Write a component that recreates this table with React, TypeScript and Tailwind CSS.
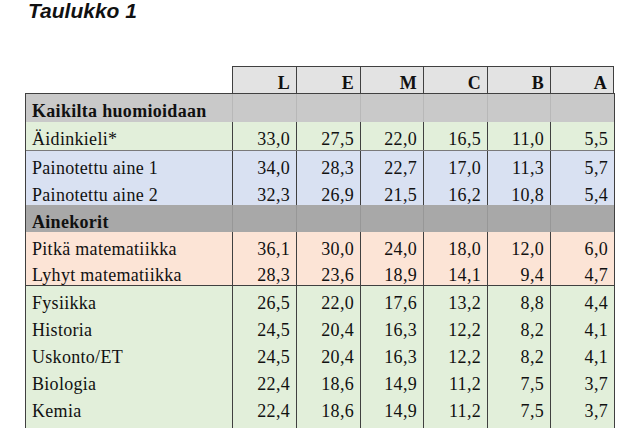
import React from 'react';

const widths = ['w-[64px]', 'w-[64px]', 'w-[63px]', 'w-[64px]', 'w-[63px]', 'w-[64px]'];
const headers = ['L', 'E', 'M', 'C', 'B', 'A'];

type Row = { label: string; values: string[]; h: string };

const groups: { bg: string; topLine: string; rows: Row[] }[] = [
  {
    bg: 'bg-[#e2efda]',
    topLine: '',
    rows: [{ label: 'Äidinkieli*', values: ['33,0', '27,5', '22,0', '16,5', '11,0', '5,5'], h: 'h-[28px]' }],
  },
  {
    bg: 'bg-[#d9e1f2]',
    topLine: 'border-t border-[#7a7a7a]',
    rows: [
      { label: 'Painotettu aine 1', values: ['34,0', '28,3', '22,7', '17,0', '11,3', '5,7'], h: 'h-[27px]' },
      { label: 'Painotettu aine 2', values: ['32,3', '26,9', '21,5', '16,2', '10,8', '5,4'], h: 'h-[27px]' },
    ],
  },
];

const groups2: { bg: string; topLine: string; rows: Row[] }[] = [
  {
    bg: 'bg-[#fce4d6]',
    topLine: '',
    rows: [
      { label: 'Pitkä matematiikka', values: ['36,1', '30,0', '24,0', '18,0', '12,0', '6,0'], h: 'h-[27px]' },
      { label: 'Lyhyt matematiikka', values: ['28,3', '23,6', '18,9', '14,1', '9,4', '4,7'], h: 'h-[26px]' },
    ],
  },
  {
    bg: 'bg-[#e2efda]',
    topLine: 'border-t border-[#404040]',
    rows: [
      { label: 'Fysiikka', values: ['26,5', '22,0', '17,6', '13,2', '8,8', '4,4'], h: 'h-[27px]' },
      { label: 'Historia', values: ['24,5', '20,4', '16,3', '12,2', '8,2', '4,1'], h: 'h-[27px]' },
      { label: 'Uskonto/ET', values: ['24,5', '20,4', '16,3', '12,2', '8,2', '4,1'], h: 'h-[27px]' },
      { label: 'Biologia', values: ['22,4', '18,6', '14,9', '11,2', '7,5', '3,7'], h: 'h-[27px]' },
      { label: 'Kemia', values: ['22,4', '18,6', '14,9', '11,2', '7,5', '3,7'], h: 'h-[27px]' },
      { label: '', values: ['', '', '', '', '', ''], h: 'h-[27px]' },
    ],
  },
];

const DataRow = ({ row }: { row: Row }) => (
  <div className={`flex ${row.h}`}>
    <div className="w-[206px] flex items-center pl-[6px] pt-[6px] leading-none">{row.label}</div>
    {row.values.map((v, i) => (
      <div
        key={i}
        className={`${widths[i]} border-l border-[#404040] flex items-center justify-end pr-[6px] pt-[6px] leading-none`}
      >
        {v}
      </div>
    ))}
  </div>
);

const SectionRow = ({ label, bg, line, h }: { label: string; bg: string; line: string; h: string }) => (
  <div className={`flex ${h} ${bg}`}>
    <div className="w-[206px] flex items-center pl-[6px] pt-[6px] leading-none font-bold whitespace-nowrap">
      {label}
    </div>
    {widths.map((w, i) => (
      <div key={i} className={`${w} border-l ${line}`} />
    ))}
  </div>
);

const Group = ({ g }: { g: { bg: string; topLine: string; rows: Row[] } }) => (
  <div className={`${g.bg} ${g.topLine}`}>
    {g.rows.map((r, i) => (
      <DataRow key={i} row={r} />
    ))}
  </div>
);

export default function App() {
  return (
    <div className="w-[643px] h-[428px] overflow-hidden bg-white pl-[25px]">
      <h1 className="pl-[3px] text-[21px] leading-none font-bold italic text-[#111] font-['Liberation_Sans',sans-serif]">
        Taulukko 1
      </h1>

      {/* table */}
      <div className="mt-[45px] font-['Liberation_Serif',serif] text-[18px] tracking-[0.3px] text-[#111]">
        <div className="flex h-[27px]">
          <div className="w-[207px]" />
          {headers.map((h, i) => (
            <div
              key={h}
              className={`${widths[i]} border-l ${i === 5 ? 'border-r' : ''} border-t border-[#404040] bg-[#e3e3e3] flex items-center justify-end pr-[6px] pt-[6px] font-bold leading-none`}
            >
              {h}
            </div>
          ))}
        </div>

        <div className="w-[590px] border border-b-0 border-[#404040]">
          <SectionRow label="Kaikilta huomioidaan" bg="bg-[#c9c9c9]" line="border-[#b8b8b8]" h="h-[28px]" />
          {groups.map((g, i) => (
            <Group key={i} g={g} />
          ))}
          <SectionRow label="Ainekorit" bg="bg-[#a8a8a8]" line="border-[#979797]" h="h-[27px]" />
          {groups2.map((g, i) => (
            <Group key={i} g={g} />
          ))}
        </div>
      </div>
    </div>
  );
}
